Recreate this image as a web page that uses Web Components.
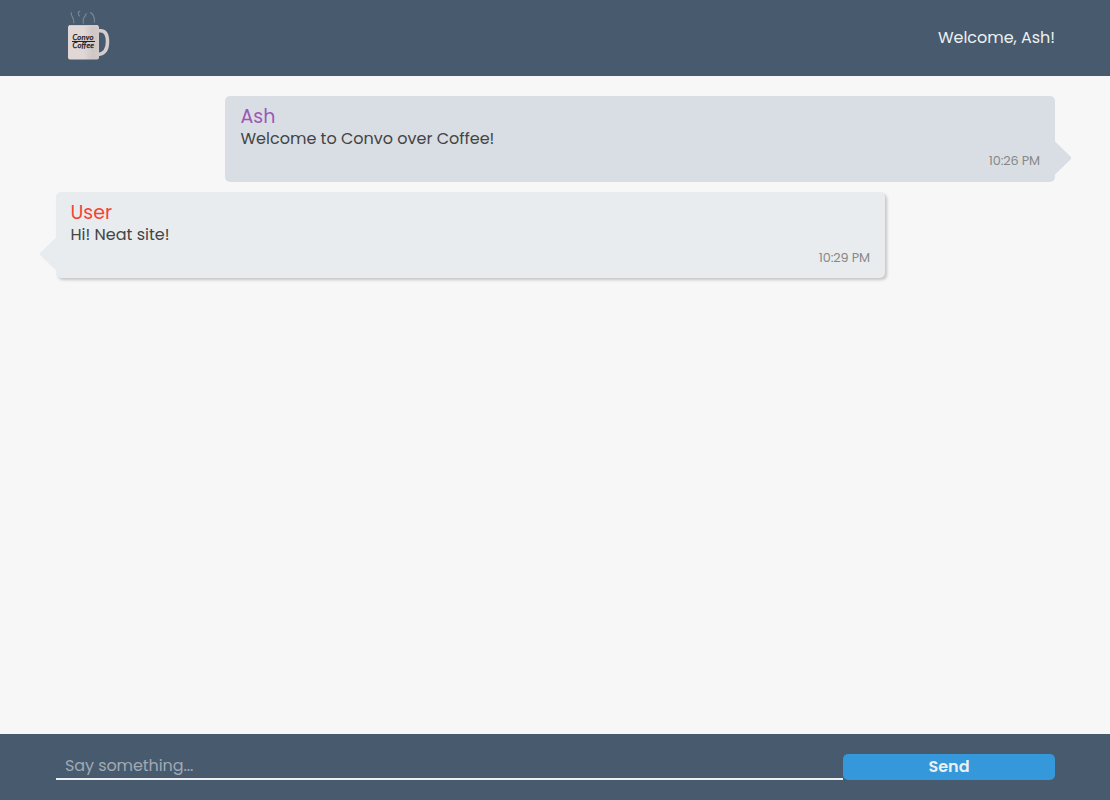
<!DOCTYPE html>
<html lang="en">
<head>
<meta charset="utf-8">
<title>Convo over Coffee</title>
<style>
html, body { margin: 0; height: 100%; }
body { font: 16px/22px Poppins, Inter, sans-serif; background: #f7f7f7; color: #444; overflow: hidden; }
</style>
</head>
<body>
<chat-app></chat-app>
<script>
function define(name, html) {
  const t = document.createElement('template');
  t.innerHTML = html;
  customElements.define(name, class extends HTMLElement {
    connectedCallback() {
      if (this.shadowRoot) return;
      this.attachShadow({ mode: 'open' }).append(t.content.cloneNode(true));
    }
  });
}

define('coffee-logo', `<style>:host{display:block;width:60px;height:60px}svg{display:block}</style>
<svg width="60" height="60" viewBox="60 5 60 60">
  <defs><linearGradient id="mug"><stop offset="0" stop-color="#e0d7d6"/><stop offset=".5" stop-color="#e0d7d6"/><stop offset=".8" stop-color="#cfc6c6"/><stop offset="1" stop-color="#d3caca"/></linearGradient></defs>
  <g fill="none" stroke="#8b959f" stroke-width="1.2" opacity=".75">
    <path d="M71.2 12.300q-.2 2.700 1.200 4.500t1.500 6.500"/>
    <path d="M80.200 11.300q-2.200.2-1.900 2t1.300 3"/>
    <path d="M86.400 13.300q-.8 2.600-2.200 4t-.8 6.300"/>
    <path d="M90 12.600q2.500.4 3.700 3.700t.6 6.300"/>
  </g>
  <path d="M98 30.800h2.500c5 0 7 4.500 7 11S105 54 98 54.500" fill="none" stroke="#d5cccd" stroke-width="3.500"/>
  <path d="M69.500 25.500h28q1.500 0 1.500 1.500v30.500q0 2-2 2H70q-2 0-2-2V27q0-1.500 1.500-1.500z" fill="url(#mug)"/>
  <path d="M69 25.700h29" stroke="#efe7e5" stroke-width=".8"/>
  <g fill="#17120f" stroke="#17120f" stroke-width=".25" font-family="Lato, sans-serif" font-size="7.600" font-style="italic">
    <text x="72.500" y="40" textLength="21" lengthAdjust="spacing">Convo</text>
    <text x="72.500" y="48" textLength="21.500" lengthAdjust="spacing">Coffee</text>
  </g>
  <path d="M72 41.500h23" stroke="#26201e" stroke-width="1"/>
</svg>`);

define('chat-header', `<style>
:host{display:flex;justify-content:space-between;align-items:flex-start;height:76px;box-sizing:border-box;padding:5px 55px 0 60px;background:#485a6e;color:#ecf0f1}
.greeting{padding-top:22px;height:22px;letter-spacing:-.03px}</style>
<coffee-logo></coffee-logo><div class="greeting"><slot></slot></div>`);

define('chat-message', `<style>
:host{display:block;position:relative;box-sizing:border-box;width:830px;height:86px;padding:10px 15px 0 15.500px;border-radius:5px;background:var(--bubble)}
:host([mine]){--bubble:#d9dee4;align-self:flex-end}
:host(:not([mine])){--bubble:#e8ecef;box-shadow:2px 2px 3px rgba(0,0,0,.2);padding-left:14.500px;width:829px}
.name{height:22px;font-size:19px;color:var(--name)}
.body{height:22px}
.time{margin-top:var(--time-gap,1px);height:20px;line-height:20px;font-size:12.800px;letter-spacing:-.12px;color:#888;text-align:right}
.tail{position:absolute;top:45px;width:17px;height:34px;background:var(--bubble)}
:host([mine]) .tail{left:calc(100% - .5px);clip-path:polygon(0 0,15.500px 15px,17px 17px,15.500px 19px,0 34px)}
:host(:not([mine])) .tail{right:calc(100% - .5px);clip-path:polygon(17px 0,1.500px 15px,0 17px,1.500px 19px,17px 34px)}
</style>
<div class="name"><slot name="name"></slot></div>
<div class="body"><slot></slot></div>
<div class="time"><slot name="time"></slot></div>
<div class="tail"></div>`);

define('chat-composer', `<style>
:host{display:flex;height:66px;box-sizing:border-box;padding:20px 55px 0 56px;background:#485a6e}
.field{flex:1;height:23px;padding-top:1px;border-bottom:2px solid #ecf0f1;padding-left:9px;color:#a0aab4;letter-spacing:-.08px}
button{width:212px;height:26px;padding:0;border:0;border-radius:5px;background:#3498db;color:#ecf0f1;font:600 16px/24px Poppins,Inter,sans-serif}
</style><div class="field">Say something...</div><button>Send</button>`);

define('chat-app', `<style>
:host{display:flex;flex-direction:column;height:100vh}
main{flex:1;display:flex;flex-direction:column;gap:10px;padding:20px 55px 0 56px}
</style>
<chat-header>Welcome, Ash!</chat-header>
<main>
<chat-message mine style="--name:#9b59b6"><span slot="name">Ash</span>Welcome to Convo over Coffee!<span slot="time">10:26 PM</span></chat-message>
<chat-message style="--name:#f44336;--time-gap:2px"><span slot="name">User</span>Hi! Neat site!<span slot="time">10:29 PM</span></chat-message>
</main>
<chat-composer></chat-composer>`);
</script>
</body>
</html>
